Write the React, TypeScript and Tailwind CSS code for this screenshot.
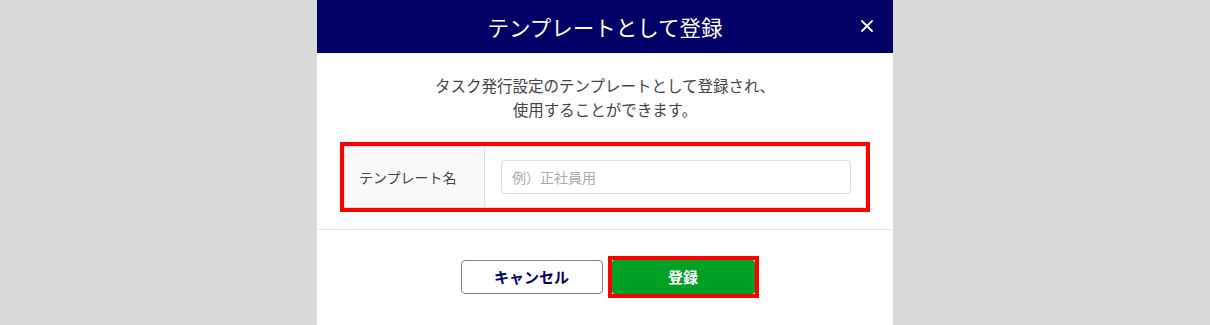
const font = "font-['Noto_Sans_CJK_JP','Noto_Sans',sans-serif]";

function CloseIcon() {
  return (
    <svg width="14" height="14" viewBox="0 0 14 14" className="text-white">
      <path d="M2 2L12 12M12 2L2 12" stroke="currentColor" strokeWidth="1.8" strokeLinecap="round" />
    </svg>
  );
}

export default function App() {
  return (
    <div className={`h-[325px] w-[1210px] overflow-hidden bg-[#d9d9d9] ${font}`}>
      <div className="ml-[317px] flex h-[330px] w-[576px] flex-col rounded-b-[6px] bg-white">
        <header className="relative flex h-[53px] shrink-0 items-center justify-center bg-[#000066]">
          <h1 className="text-[21.5px] font-normal leading-none text-white">テンプレートとして登録</h1>
          <button className="absolute right-[18px] top-[18px] grid size-[16px] place-items-center">
            <CloseIcon />
          </button>
        </header>

        <div className="pt-[20px] text-center text-[15.5px] leading-[24px] text-[#444]">
          <p>タスク発行設定のテンプレートとして登録され、</p>
          <p>使用することができます。</p>
        </div>

        <div className="mx-[23px] mt-[21px] border-4 border-[#ff0000]">
          <div className="flex h-[62px] border border-[#e0e0e0]">
            <div className="flex w-[140px] shrink-0 items-center border-r border-[#e0e0e0] bg-[#f9f9f9] pl-[14px] text-[14px] text-[#444]">
              テンプレート名
            </div>
            <div className="flex flex-1 items-center pl-[16px] pr-[14px]">
              <input
                type="text"
                placeholder="例）正社員用"
                className="h-[34px] w-full rounded-[4px] border border-[#dcdcdc] bg-white px-[10px] text-[14px] text-[#333] outline-none placeholder:text-[#aaa]"
              />
            </div>
          </div>
        </div>

        <div className="mt-[17px] border-t border-[#e6e6e6]" />

        <div className="flex items-center justify-center gap-[5px] pl-[9px] pt-[26px]">
          <button className="h-[34px] w-[142px] rounded-[4px] border border-[#8080b3] bg-white text-[15px] font-bold text-[#000066]">
            キャンセル
          </button>
          <div className="border-4 border-[#ff0000]">
            <button className="block h-[34px] w-[143px] rounded-[3px] bg-[#00a024] text-[15px] font-bold text-white">
              登録
            </button>
          </div>
        </div>
      </div>
    </div>
  );
}
